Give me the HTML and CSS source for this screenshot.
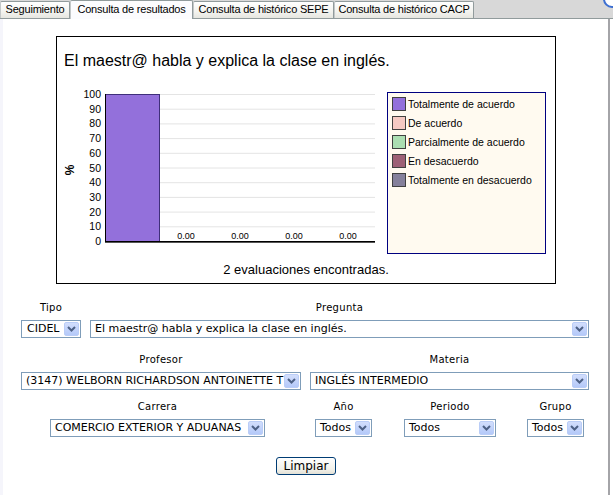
FILE: index.html
```html
<!DOCTYPE html>
<html lang="es">
<head>
<meta charset="utf-8">
<title>Consulta de resultados</title>
<link rel="stylesheet" href="styles.css">
</head>
<body>
<div class="tabs">
  <div class="tab t1">Seguimiento</div>
  <div class="tab t2 active">Consulta de resultados</div>
  <div class="tab t3">Consulta de histórico SEPE</div>
  <div class="tab t4">Consulta de histórico CACP</div>
  <span class="corner"></span>
</div>
<div class="panel">
  <div class="chart">
    <div class="chart-title">El maestr@ habla y explica la clase en inglés.</div>
    <div class="chart-body">
      <svg class="plot" width="325" height="160" viewBox="0 0 325 160">
        <g class="grid">
          <line x1="49" x2="318" y1="138.8" y2="138.8"/>
          <line x1="49" x2="318" y1="124.1" y2="124.1"/>
          <line x1="49" x2="318" y1="109.4" y2="109.4"/>
          <line x1="49" x2="318" y1="94.7" y2="94.7"/>
          <line x1="49" x2="318" y1="80" y2="80"/>
          <line x1="49" x2="318" y1="65.3" y2="65.3"/>
          <line x1="49" x2="318" y1="50.6" y2="50.6"/>
          <line x1="49" x2="318" y1="35.9" y2="35.9"/>
          <line x1="49" x2="318" y1="21.2" y2="21.2"/>
          <line x1="49" x2="318" y1="6.5" y2="6.5"/>
        </g>
        <g class="ylabels">
          <text x="44" y="157">0</text>
          <text x="44" y="142.3">10</text>
          <text x="44" y="127.6">20</text>
          <text x="44" y="112.9">30</text>
          <text x="44" y="98.2">40</text>
          <text x="44" y="83.5">50</text>
          <text x="44" y="68.8">60</text>
          <text x="44" y="54.1">70</text>
          <text x="44" y="39.4">80</text>
          <text x="44" y="24.7">90</text>
          <text x="44" y="10">100</text>
        </g>
        <text class="unit" transform="translate(17 82) rotate(-90)">%</text>
        <rect class="bar" x="48.5" y="6.5" width="54" height="147"/>
        <line class="axis" x1="48.5" x2="48.5" y1="6" y2="155"/>
        <line class="axis" x1="48" x2="318" y1="153.5" y2="153.5"/>
        <line class="axis2" x1="48" x2="318" y1="154.5" y2="154.5"/>
        <g class="values">
          <text x="129" y="151">0.00</text>
          <text x="183" y="151">0.00</text>
          <text x="237" y="151">0.00</text>
          <text x="291" y="151">0.00</text>
        </g>
      </svg>
      <div class="legend">
        <div class="legend-item"><span class="swatch sw1"></span>Totalmente de acuerdo</div>
        <div class="legend-item"><span class="swatch sw2"></span>De acuerdo</div>
        <div class="legend-item"><span class="swatch sw3"></span>Parcialmente de acuerdo</div>
        <div class="legend-item"><span class="swatch sw4"></span>En desacuerdo</div>
        <div class="legend-item"><span class="swatch sw5"></span>Totalmente en desacuerdo</div>
      </div>
    </div>
    <div class="chart-caption">2 evaluaciones encontradas.</div>
  </div>

  <div class="filters">
    <div class="row row1">
      <div class="field f-tipo">
        <div class="label">Tipo</div>
        <div class="select"><span class="select-text">CIDEL</span><span class="select-btn"><svg width="9" height="6" viewBox="0 0 9 6"><path d="M1 1 L4.5 4.5 L8 1"/></svg></span></div>
      </div>
      <div class="field f-pregunta">
        <div class="label">Pregunta</div>
        <div class="select"><span class="select-text">El maestr@ habla y explica la clase en inglés.</span><span class="select-btn"><svg width="9" height="6" viewBox="0 0 9 6"><path d="M1 1 L4.5 4.5 L8 1"/></svg></span></div>
      </div>
    </div>
    <div class="row row2">
      <div class="field f-profesor">
        <div class="label">Profesor</div>
        <div class="select"><span class="select-text">(3147) WELBORN RICHARDSON ANTOINETTE T</span><span class="select-btn"><svg width="9" height="6" viewBox="0 0 9 6"><path d="M1 1 L4.5 4.5 L8 1"/></svg></span></div>
      </div>
      <div class="field f-materia">
        <div class="label">Materia</div>
        <div class="select"><span class="select-text">INGLÉS INTERMEDIO</span><span class="select-btn"><svg width="9" height="6" viewBox="0 0 9 6"><path d="M1 1 L4.5 4.5 L8 1"/></svg></span></div>
      </div>
    </div>
    <div class="row row3">
      <div class="field f-carrera">
        <div class="label">Carrera</div>
        <div class="select"><span class="select-text">COMERCIO EXTERIOR Y ADUANAS</span><span class="select-btn"><svg width="9" height="6" viewBox="0 0 9 6"><path d="M1 1 L4.5 4.5 L8 1"/></svg></span></div>
      </div>
      <div class="field f-anio">
        <div class="label">Año</div>
        <div class="select"><span class="select-text">Todos</span><span class="select-btn"><svg width="9" height="6" viewBox="0 0 9 6"><path d="M1 1 L4.5 4.5 L8 1"/></svg></span></div>
      </div>
      <div class="field f-periodo">
        <div class="label">Periodo</div>
        <div class="select"><span class="select-text">Todos</span><span class="select-btn"><svg width="9" height="6" viewBox="0 0 9 6"><path d="M1 1 L4.5 4.5 L8 1"/></svg></span></div>
      </div>
      <div class="field f-grupo">
        <div class="label">Grupo</div>
        <div class="select"><span class="select-text">Todos</span><span class="select-btn"><svg width="9" height="6" viewBox="0 0 9 6"><path d="M1 1 L4.5 4.5 L8 1"/></svg></span></div>
      </div>
    </div>
    <div class="row row4">
      <button class="btn" type="button">Limpiar</button>
    </div>
  </div>
</div>
</body>
</html>
```
FILE: styles.css
```css
html, body {
  margin: 0;
  padding: 0;
  background: #ffffff;
  overflow: hidden;
}
body {
  font-family: "Liberation Sans", Arial, sans-serif;
  color: #000;
  width: 613px;
  height: 495px;
}

/* Tabs */
.tabs {
  position: relative;
  display: flex;
  align-items: flex-end;
  height: 18px;
  background: #d8d8d8;
  border-bottom: 1px solid #919b9c;
  overflow: visible;
}
.tab {
  box-sizing: border-box;
  flex: none;
  height: 17px;
  padding: 0;
  border: 1px solid #919b9c;
  border-bottom: none;
  border-left-color: #c4c8c9;
  border-radius: 2px 2px 0 0;
  background: linear-gradient(#ffffff, #f3f3ef 60%, #e6e6e0);
  font-size: 11px;
  letter-spacing: -0.2px;
  line-height: 15px;
  text-align: center;
  white-space: nowrap;
}
.t1 { width: 70px; }
.t2 { width: 123px; }
.t3 { width: 141px; }
.t4 { width: 140px; }
.tab.active {
  height: 19px;
  margin-bottom: -1px;
  background: #fcfcfe;
  line-height: 16px;
}
.corner {
  position: absolute;
  top: -10px;
  right: -8px;
  width: 14px;
  height: 14px;
  border: 2px solid #3d6fd1;
  border-radius: 50%;
  background: #ffffff;
}

/* Panel */
.panel {
  box-sizing: border-box;
  width: 610px;
  height: 476px;
  background: #ffffff;
  border-left: 3px solid #f5f5fb;
  border-right: 2px solid #a4a4a8;
  padding-top: 17px;
}

/* Chart */
.chart {
  box-sizing: border-box;
  width: 500px;
  height: 248px;
  margin-left: 53px;
  border: 1px solid #000;
  background: #fff;
}
.chart-title {
  padding: 15px 0 0 7px;
  font-size: 16px;
  line-height: 17px;
  white-space: nowrap;
}
.chart-body {
  display: flex;
  margin-top: 19px;
  height: 166px;
}
.plot {
  display: block;
  flex: none;
}
.grid line {
  stroke: #e4e4e4;
  stroke-width: 1;
}
.ylabels text {
  font-family: "Liberation Sans", Arial, sans-serif;
  font-size: 10.5px;
  text-anchor: end;
  fill: #000;
}
.unit {
  font-family: "Liberation Sans", Arial, sans-serif;
  font-size: 12px;
  font-weight: bold;
  text-anchor: middle;
  fill: #000;
}
.bar {
  fill: #9370db;
  stroke: #3f2f7a;
  stroke-width: 1;
}
.axis {
  stroke: #000;
  stroke-width: 1;
}
.axis2 {
  stroke: #555;
  stroke-width: 1;
}
.values text {
  font-family: "Liberation Sans", Arial, sans-serif;
  font-size: 9px;
  text-anchor: middle;
  fill: #000;
}
.legend {
  box-sizing: border-box;
  width: 159px;
  height: 162px;
  margin: 4px 0 0 5px;
  padding: 1px 0 0 4px;
  border: 1px solid #000080;
  background: #fffaf0;
}
.legend-item {
  display: flex;
  align-items: center;
  height: 19px;
  font-size: 10.5px;
  white-space: nowrap;
}
.swatch {
  box-sizing: border-box;
  width: 14px;
  height: 14px;
  margin-right: 2px;
  border: 1px solid #404040;
}
.sw1 { background: #9370db; }
.sw2 { background: #f5c9c3; }
.sw3 { background: #abdeb2; }
.sw4 { background: #9d6076; }
.sw5 { background: #85809b; }
.chart-caption {
  margin-top: 9px;
  text-align: center;
  font-size: 13px;
  line-height: 14px;
}

/* Filters */
.filters {
  margin-left: 18px;
  font-family: "DejaVu Sans", Verdana, sans-serif;
}
.row {
  display: flex;
}
.row1 { margin-top: 17px; }
.row2 { margin-top: 15px; }
.row3 { margin-top: 10px; }
.row4 { margin-top: 20px; }
.field {
  display: flex;
  flex-direction: column;
  align-items: center;
  gap: 5px;
}
.label {
  font-size: 10px;
  letter-spacing: 0.3px;
  line-height: 14px;
  white-space: nowrap;
}
.f-tipo { width: 60px; }
.f-pregunta { width: 499px; margin-left: 9px; }
.f-profesor { width: 280px; }
.f-materia { width: 279px; margin-left: 9px; }
.f-carrera { width: 215px; margin-left: 29px; }
.f-anio { width: 57px; margin-left: 50px; }
.f-periodo { width: 92px; margin-left: 32px; }
.f-grupo { width: 57px; margin-left: 31px; }

.select {
  box-sizing: border-box;
  display: flex;
  align-items: center;
  width: 100%;
  height: 18px;
  border: 1px solid #7f9db9;
  background: #fff;
}
.select-text {
  flex: 1;
  min-width: 0;
  overflow: hidden;
  white-space: nowrap;
  padding-left: 4px;
  font-size: 11px;
  line-height: 14px;
}
.f-tipo .select-text { padding-left: 5px; }
.select-btn {
  box-sizing: border-box;
  flex: none;
  display: flex;
  align-items: center;
  justify-content: center;
  width: 15px;
  height: 14px;
  margin-right: 1px;
  border: 1px solid #bacdf7;
  border-radius: 2px;
  background: linear-gradient(#d2defc, #b4c9f9);
}
.select-btn svg {
  display: block;
}
.select-btn path {
  fill: none;
  stroke: #4d6185;
  stroke-width: 2;
}

.btn {
  box-sizing: border-box;
  width: 60px;
  height: 18px;
  margin-left: 255px;
  padding: 0;
  border: 1px solid #003c74;
  border-radius: 3px;
  background: linear-gradient(#ffffff, #f2f1ea 70%, #e3e1d6);
  font-family: "DejaVu Sans", Verdana, sans-serif;
  font-size: 12px;
  line-height: 14px;
  color: #000;
}
```
